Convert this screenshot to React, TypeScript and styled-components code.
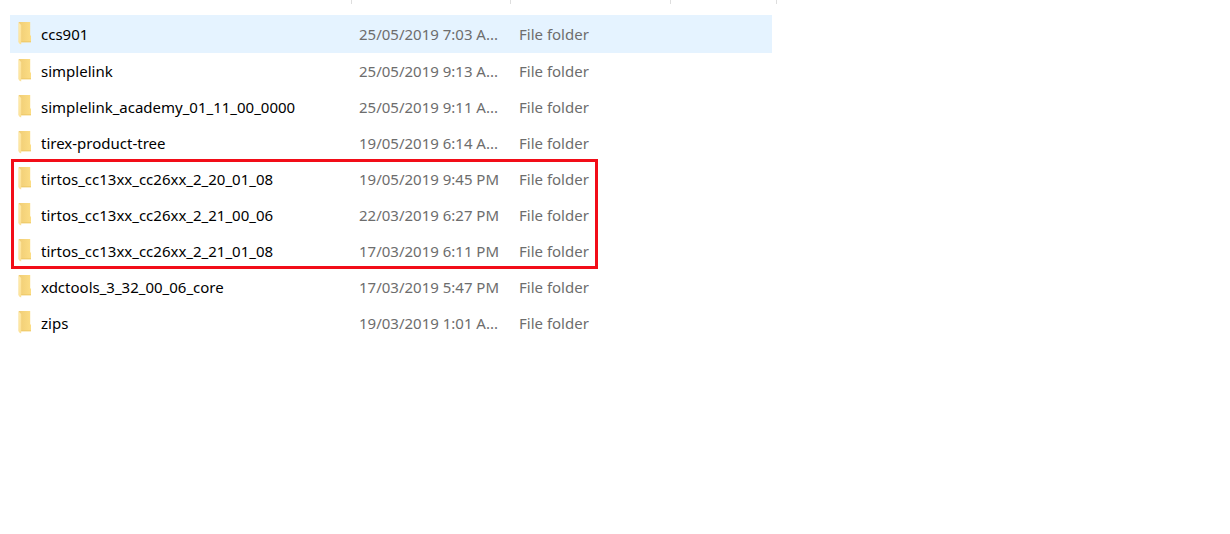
import React from "react";
import styled, { createGlobalStyle } from "styled-components";

const GlobalStyle = createGlobalStyle`
  *, *::before, *::after { box-sizing: border-box; }
  body {
    margin: 0;
    background: #ffffff;
    font-family: "Noto Sans", "Open Sans", sans-serif;
  }
`;

const Page = styled.main`
  padding: 0 10px 10px;
`;

const ColumnEdges = styled.div`
  display: flex;
  height: 4px;
  margin-bottom: 11px;
`;

const ColumnEdge = styled.span<{ $width: number }>`
  flex: 0 0 ${(p) => p.$width}px;
  border-right: 1px solid #dedede;
`;

const FileTable = styled.table`
  width: 100%;
  max-width: 762px;
  table-layout: fixed;
  border-collapse: collapse;
  font-size: 15px;
  line-height: 20px;
`;

const Column = styled.col<{ $width?: number }>`
  width: ${(p) => (p.$width ? `${p.$width}px` : "auto")};
`;

const Group = styled.tbody<{ $marked: boolean }>`
  position: relative;

  ${(p) =>
    p.$marked &&
    `&::after {
      content: "";
      position: absolute;
      top: -2px;
      left: 1px;
      width: 587px;
      height: 110px;
      border: 3px solid #f20d18;
      pointer-events: none;
    }`}
`;

const Row = styled.tr<{ $selected: boolean }>`
  height: ${(p) => (p.$selected ? 38 : 36)}px;
  background: ${(p) => (p.$selected ? "#e5f3ff" : "transparent")};
`;

const NameCell = styled.th`
  padding: 0 0 0 8px;
  color: #000000;
  font-weight: 400;
  text-align: left;
  white-space: nowrap;
`;

const NameContent = styled.div`
  display: flex;
  align-items: center;
  gap: 10px;
`;

const Cell = styled.td`
  padding: 0 0 0 8px;
  color: #6d6d6d;
  white-space: nowrap;
`;

const Icon = styled.svg`
  flex: none;
  width: 13px;
  height: 24px;
  margin-bottom: 2px;
`;

const FolderIcon = () => (
  <Icon viewBox="0 0 13 24" aria-hidden="true">
    <defs>
      <linearGradient id="folderBack" x1="0" y1="0" x2="1" y2="0">
        <stop offset="0" stopColor="#f0cd76" />
        <stop offset="1" stopColor="#fcdd84" />
      </linearGradient>
      <linearGradient id="folderFront" x1="0" y1="0" x2="1" y2="1">
        <stop offset="0" stopColor="#ffecb0" />
        <stop offset="1" stopColor="#fbdf92" />
      </linearGradient>
    </defs>
    <path d="M.7 1H12.2V14.5H13V21.2H.7Z" fill="url(#folderBack)" />
    <path d="M3 20.4H13V21.2H3Z" fill="#ecc663" />
    <path d="M.5 1.5L3.2 4V23.6L1.2 22.4L.5 21Z" fill="url(#folderFront)" />
  </Icon>
);

type Entry = { name: string; modified: string; selected?: boolean };

const groups: { marked: boolean; entries: Entry[] }[] = [
  {
    marked: false,
    entries: [
      { name: "ccs901", modified: "25/05/2019 7:03 A...", selected: true },
      { name: "simplelink", modified: "25/05/2019 9:13 A..." },
      { name: "simplelink_academy_01_11_00_0000", modified: "25/05/2019 9:11 A..." },
      { name: "tirex-product-tree", modified: "19/05/2019 6:14 A..." },
    ],
  },
  {
    marked: true,
    entries: [
      { name: "tirtos_cc13xx_cc26xx_2_20_01_08", modified: "19/05/2019 9:45 PM" },
      { name: "tirtos_cc13xx_cc26xx_2_21_00_06", modified: "22/03/2019 6:27 PM" },
      { name: "tirtos_cc13xx_cc26xx_2_21_01_08", modified: "17/03/2019 6:11 PM" },
    ],
  },
  {
    marked: false,
    entries: [
      { name: "xdctools_3_32_00_06_core", modified: "17/03/2019 5:47 PM" },
      { name: "zips", modified: "19/03/2019 1:01 A..." },
    ],
  },
];

const edgeWidths = [342, 159, 160, 106];

export default function App() {
  return (
    <>
      <GlobalStyle />
      <Page>
        <ColumnEdges aria-hidden="true">
          {edgeWidths.map((width) => (
            <ColumnEdge key={width} $width={width} />
          ))}
        </ColumnEdges>
        <FileTable aria-label="Files">
          <colgroup>
            <Column $width={341} />
            <Column $width={160} />
            <Column />
          </colgroup>
          {groups.map((group) => (
            <Group key={group.entries[0].name} $marked={group.marked}>
              {group.entries.map((entry) => (
                <Row key={entry.name} $selected={Boolean(entry.selected)}>
                  <NameCell scope="row">
                    <NameContent>
                      <FolderIcon />
                      {entry.name}
                    </NameContent>
                  </NameCell>
                  <Cell>{entry.modified}</Cell>
                  <Cell>File folder</Cell>
                </Row>
              ))}
            </Group>
          ))}
        </FileTable>
      </Page>
    </>
  );
}
